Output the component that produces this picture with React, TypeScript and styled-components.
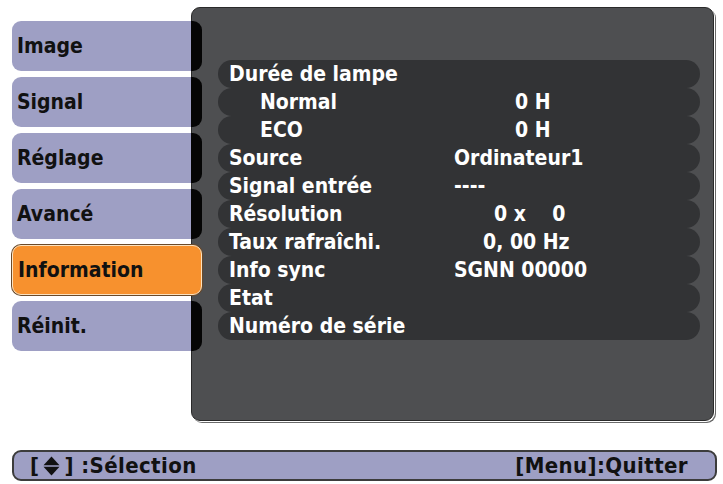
import styled, { createGlobalStyle } from 'styled-components';

const GlobalStyle = createGlobalStyle`
  html, body {
    margin: 0;
    padding: 0;
    background: #ffffff;
  }
  * {
    box-sizing: border-box;
  }
`;

// 왼쪽 탭 메뉴
const tabs = ['Image', 'Signal', 'Réglage', 'Avancé', 'Information', 'Réinit.'];
const activeTab = 'Information';

type InfoRow = {
  label: string;
  value?: string;
  indent?: boolean;
  shift?: number;
};

const rows: InfoRow[] = [
  { label: 'Durée de lampe' },
  { label: 'Normal', value: '0 H', indent: true, shift: 61 },
  { label: 'ECO', value: '0 H', indent: true, shift: 61 },
  { label: 'Source', value: 'Ordinateur1' },
  { label: 'Signal entrée', value: '----' },
  { label: 'Résolution', value: '0 x    0', shift: 40 },
  { label: 'Taux rafraîchi.', value: '0, 00 Hz', shift: 29 },
  { label: 'Info sync', value: 'SGNN 00000' },
  { label: 'Etat' },
  { label: 'Numéro de série' },
];

const UpDownIcon = () => (
  <svg width="17" height="20" viewBox="0 0 17 20">
    <polygon points="8.5,0.5 16.5,9.2 0.5,9.2" fill="#111" />
    <polygon points="0.5,10.8 16.5,10.8 8.5,19.5" fill="#111" />
  </svg>
);

const App = () => {
  return (
    <>
      <GlobalStyle />
      <Page>
        <TopArea>
          <TabColumn>
            {tabs.map((t) => (
              <Tab key={t} $active={t === activeTab}>
                {t}
              </Tab>
            ))}
          </TabColumn>
          <Panel>
            <RowList>
              {rows.map((r) => (
                <Row key={r.label}>
                  <Label $indent={r.indent}>{r.label}</Label>
                  <Value $shift={r.shift ?? 0}>{r.value ?? ''}</Value>
                </Row>
              ))}
            </RowList>
          </Panel>
        </TopArea>
        <Footer>
          <Hint>
            [<UpDownIcon />] :Sélection
          </Hint>
          <Hint>[Menu]:Quitter</Hint>
        </Footer>
      </Page>
    </>
  );
};

const Page = styled.div`
  width: 723px;
  height: 484px;
  padding: 7px 0 0 12px;
  display: flex;
  flex-direction: column;
  font-family: 'DejaVu Sans Condensed', 'DejaVu Sans', sans-serif;
  overflow: hidden;
`;

const TopArea = styled.div`
  display: flex;
  align-items: flex-start;
`;

const TabColumn = styled.div`
  width: 179px;
  flex-shrink: 0;
  padding-top: 14px;
  display: flex;
  flex-direction: column;
  gap: 6px;
  position: relative;
  z-index: 1;
`;

const Tab = styled.div<{ $active?: boolean }>`
  width: 190px;
  height: 50px;
  display: flex;
  align-items: center;
  padding-left: 5px;
  font-size: 21px;
  font-weight: bold;
  color: #111;
  border-radius: 9px;
  background: ${({ $active }) =>
    $active
      ? '#f7912e'
      : 'linear-gradient(to right, #9e9fc4 0, #9e9fc4 179px, #050505 179px)'};
  border: ${({ $active }) => ($active ? '1px solid #fbe2c0' : 'none')};
  box-shadow: ${({ $active }) => ($active ? '0 0 0 1px #6b4a2a' : 'none')};
`;

const Panel = styled.div`
  width: 523px;
  height: 414px;
  flex-shrink: 0;
  background: #4e4f51;
  border: 1px solid #2a2a2a;
  border-radius: 9px;
  box-shadow: 1px 1px 0 #ffffff, 2px 2px 0 #6a6a6a;
`;

const RowList = styled.div`
  padding: 52px 13px 0 26px;
  display: flex;
  flex-direction: column;
`;

const Row = styled.div`
  height: 28px;
  border-radius: 14px;
  background: #323335;
  display: grid;
  grid-template-columns: 236px 1fr;
  align-items: center;
  color: #ffffff;
  font-size: 21px;
  font-weight: bold;
  line-height: 28px;
`;

const Label = styled.div<{ $indent?: boolean }>`
  padding-left: ${({ $indent }) => ($indent ? '42px' : '11px')};
  white-space: nowrap;
`;

const Value = styled.div<{ $shift: number }>`
  padding-left: ${({ $shift }) => $shift}px;
  white-space: pre;
`;

const Footer = styled.div`
  margin-top: 29px;
  width: 705px;
  height: 31px;
  border: 2px solid #3c3c3c;
  border-radius: 9px;
  background: #9e9fc4;
  display: flex;
  align-items: center;
  justify-content: space-between;
  padding: 0 27px 0 16px;
  font-size: 22px;
  font-weight: bold;
  letter-spacing: 0.4px;
  color: #111;
`;

const Hint = styled.div`
  display: flex;
  align-items: center;
  white-space: pre;

  svg {
    margin: 0 4px;
  }
`;

export default App;
